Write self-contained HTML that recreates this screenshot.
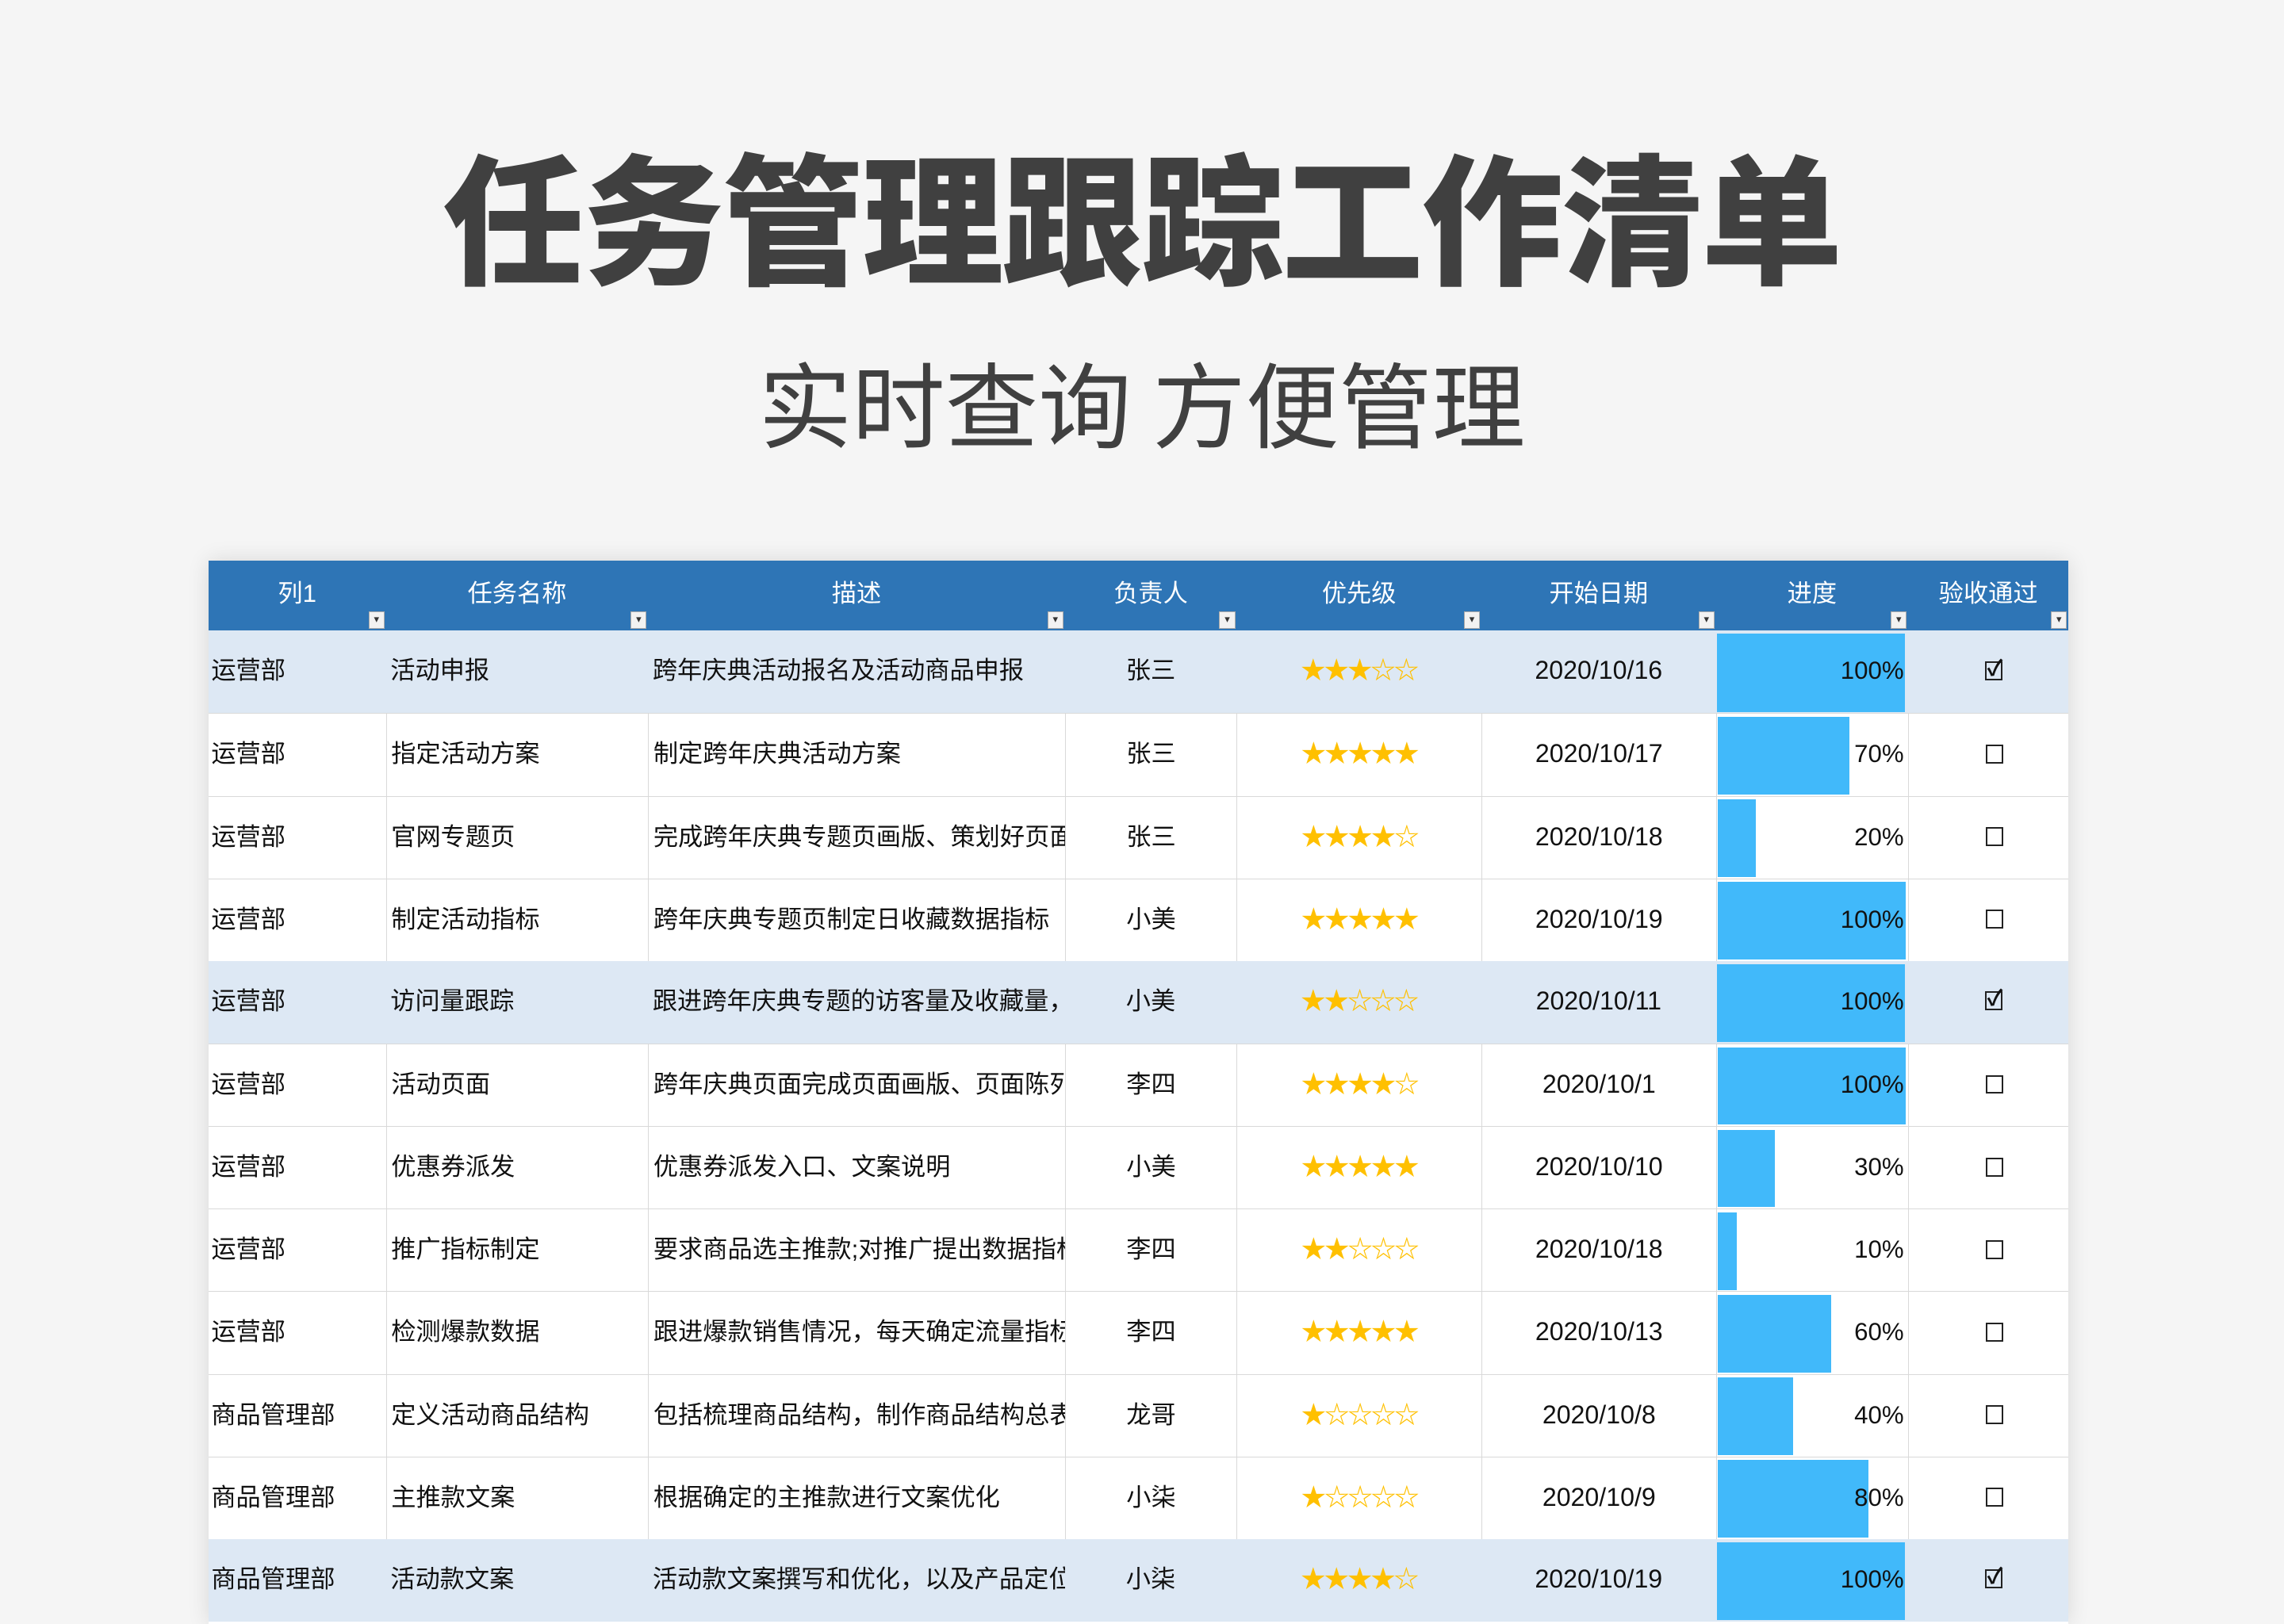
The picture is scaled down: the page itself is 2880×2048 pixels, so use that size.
<!DOCTYPE html>
<html><head><meta charset="utf-8">
<style>
html,body{margin:0;padding:0;background:#f5f5f5;}
body{width:2880px;height:2038px;overflow:hidden;}
#w{zoom:1.836735;width:1568px;height:1110px;position:relative;font-family:"Liberation Sans","Noto Sans CJK SC",sans-serif;}
.t1{position:absolute;left:0;width:1568px;top:86px;text-align:center;font-size:97px;font-weight:900;color:#404040;line-height:120px;letter-spacing:-1px;font-family:"Noto Sans CJK SC",sans-serif;}
.t2{position:absolute;left:0;width:1568px;top:235px;text-align:center;font-size:64px;color:#404040;line-height:80px;font-family:"Noto Sans CJK SC",sans-serif;}
.tb{position:absolute;left:143px;top:385px;width:1277px;height:730px;background:#fff;box-shadow:0 0 14px rgba(0,0,0,.12);}
.hd{position:absolute;left:0;top:0;width:1277px;height:48px;background:#2e75b6;border-bottom:1px solid #8db4e2;}
.hd .ht{position:absolute;top:0;height:48px;color:#fff;font-size:17px;line-height:46px;text-align:center;}
.hd .fb{position:absolute;top:35px;width:11px;height:12px;background:#f2f2f2;border:1px solid #aaa;box-sizing:border-box;font-size:7px;line-height:10px;text-align:center;color:#333;}
.r{position:absolute;left:0;width:1277px;height:56.7px;border-top:1px solid #d9d9d9;box-sizing:border-box;}
.r.h{background:#dde8f4;border-top:none;}
.c{position:absolute;top:0;height:100%;font-size:17px;color:#111;line-height:55px;white-space:nowrap;overflow:hidden;box-sizing:border-box;}
.r:not(.h) .c.b{border-left:1px solid #d9d9d9;}
.st{color:#ffc000;font-size:17px;letter-spacing:-1px;text-align:center;}
.bar{position:absolute;top:2px;bottom:1px;left:1px;background:#41b9fa;}
.pc{position:absolute;right:3px;top:0;font-size:17px;line-height:55px;color:#111;}
.cb{position:absolute;left:53px;top:21px;width:12px;height:13px;border:1.3px solid #222;box-sizing:border-box;background:transparent;font-size:15px;line-height:8px;text-align:center;font-weight:bold;}
</style></head><body><div id="w">
<div class="t1">任务管理跟踪工作清单</div>
<div class="t2">实时查询 方便管理</div>
<div class="tb">
<div class="hd">
<span class="ht" style="left:0;width:122px">列1</span><span class="fb" style="left:110px">▾</span>
<span class="ht" style="left:122px;width:180px">任务名称</span><span class="fb" style="left:290px">▾</span>
<span class="ht" style="left:302px;width:286px">描述</span><span class="fb" style="left:576px">▾</span>
<span class="ht" style="left:588px;width:118px">负责人</span><span class="fb" style="left:694px">▾</span>
<span class="ht" style="left:706px;width:168px">优先级</span><span class="fb" style="left:862px">▾</span>
<span class="ht" style="left:874px;width:161px">开始日期</span><span class="fb" style="left:1023px">▾</span>
<span class="ht" style="left:1035px;width:132px">进度</span><span class="fb" style="left:1155px">▾</span>
<span class="ht" style="left:1167px;width:110px">验收通过</span><span class="fb" style="left:1265px">▾</span>
</div>
<div id="rows"></div>
</div>
</div>
<script>
var d=[
["运营部","活动申报","跨年庆典活动报名及活动商品申报","张三",3,"2020/10/16",100,1],
["运营部","指定活动方案","制定跨年庆典活动方案","张三",5,"2020/10/17",70,0],
["运营部","官网专题页","完成跨年庆典专题页画版、策划好页面","张三",4,"2020/10/18",20,0],
["运营部","制定活动指标","跨年庆典专题页制定日收藏数据指标","小美",5,"2020/10/19",100,0],
["运营部","访问量跟踪","跟进跨年庆典专题的访客量及收藏量，","小美",2,"2020/10/11",100,1],
["运营部","活动页面","跨年庆典页面完成页面画版、页面陈列","李四",4,"2020/10/1",100,0],
["运营部","优惠券派发","优惠券派发入口、文案说明","小美",5,"2020/10/10",30,0],
["运营部","推广指标制定","要求商品选主推款;对推广提出数据指标","李四",2,"2020/10/18",10,0],
["运营部","检测爆款数据","跟进爆款销售情况，每天确定流量指标","李四",5,"2020/10/13",60,0],
["商品管理部","定义活动商品结构","包括梳理商品结构，制作商品结构总表","龙哥",1,"2020/10/8",40,0],
["商品管理部","主推款文案","根据确定的主推款进行文案优化","小柒",1,"2020/10/9",80,0],
["商品管理部","活动款文案","活动款文案撰写和优化，以及产品定位","小柒",4,"2020/10/19",100,1]];
var h="";
d.forEach(function(r,i){
var s="★★★★★".slice(0,r[4])+"☆☆☆☆☆".slice(0,5-r[4]);
h+='<div class="r'+(r[7]?' h':'')+'" style="top:'+(48+i*56.7)+'px">'+
'<div class="c" style="left:2px;width:120px">'+r[0]+'</div>'+
'<div class="c b" style="left:122px;width:180px;padding-left:3px">'+r[1]+'</div>'+
'<div class="c b" style="left:302px;width:286px;padding-left:3px">'+r[2]+'</div>'+
'<div class="c b" style="left:588px;width:118px;text-align:center">'+r[3]+'</div>'+
'<div class="c b st" style="left:706px;width:168px">'+s+'</div>'+
'<div class="c b" style="left:874px;width:161px;text-align:center;font-size:17.5px">'+r[5]+'</div>'+
'<div class="c b" style="left:1035px;width:132px;overflow:visible"><div class="bar" style="width:'+(r[6]*1.29)+'px"></div><div class="pc">'+r[6]+'%</div></div>'+
'<div class="c b" style="left:1167px;width:110px;overflow:visible"><div class="cb">'+(r[7]?'✓':'')+'</div></div>'+
'</div>';});
document.getElementById("rows").innerHTML=h;
</script>
</body></html>
